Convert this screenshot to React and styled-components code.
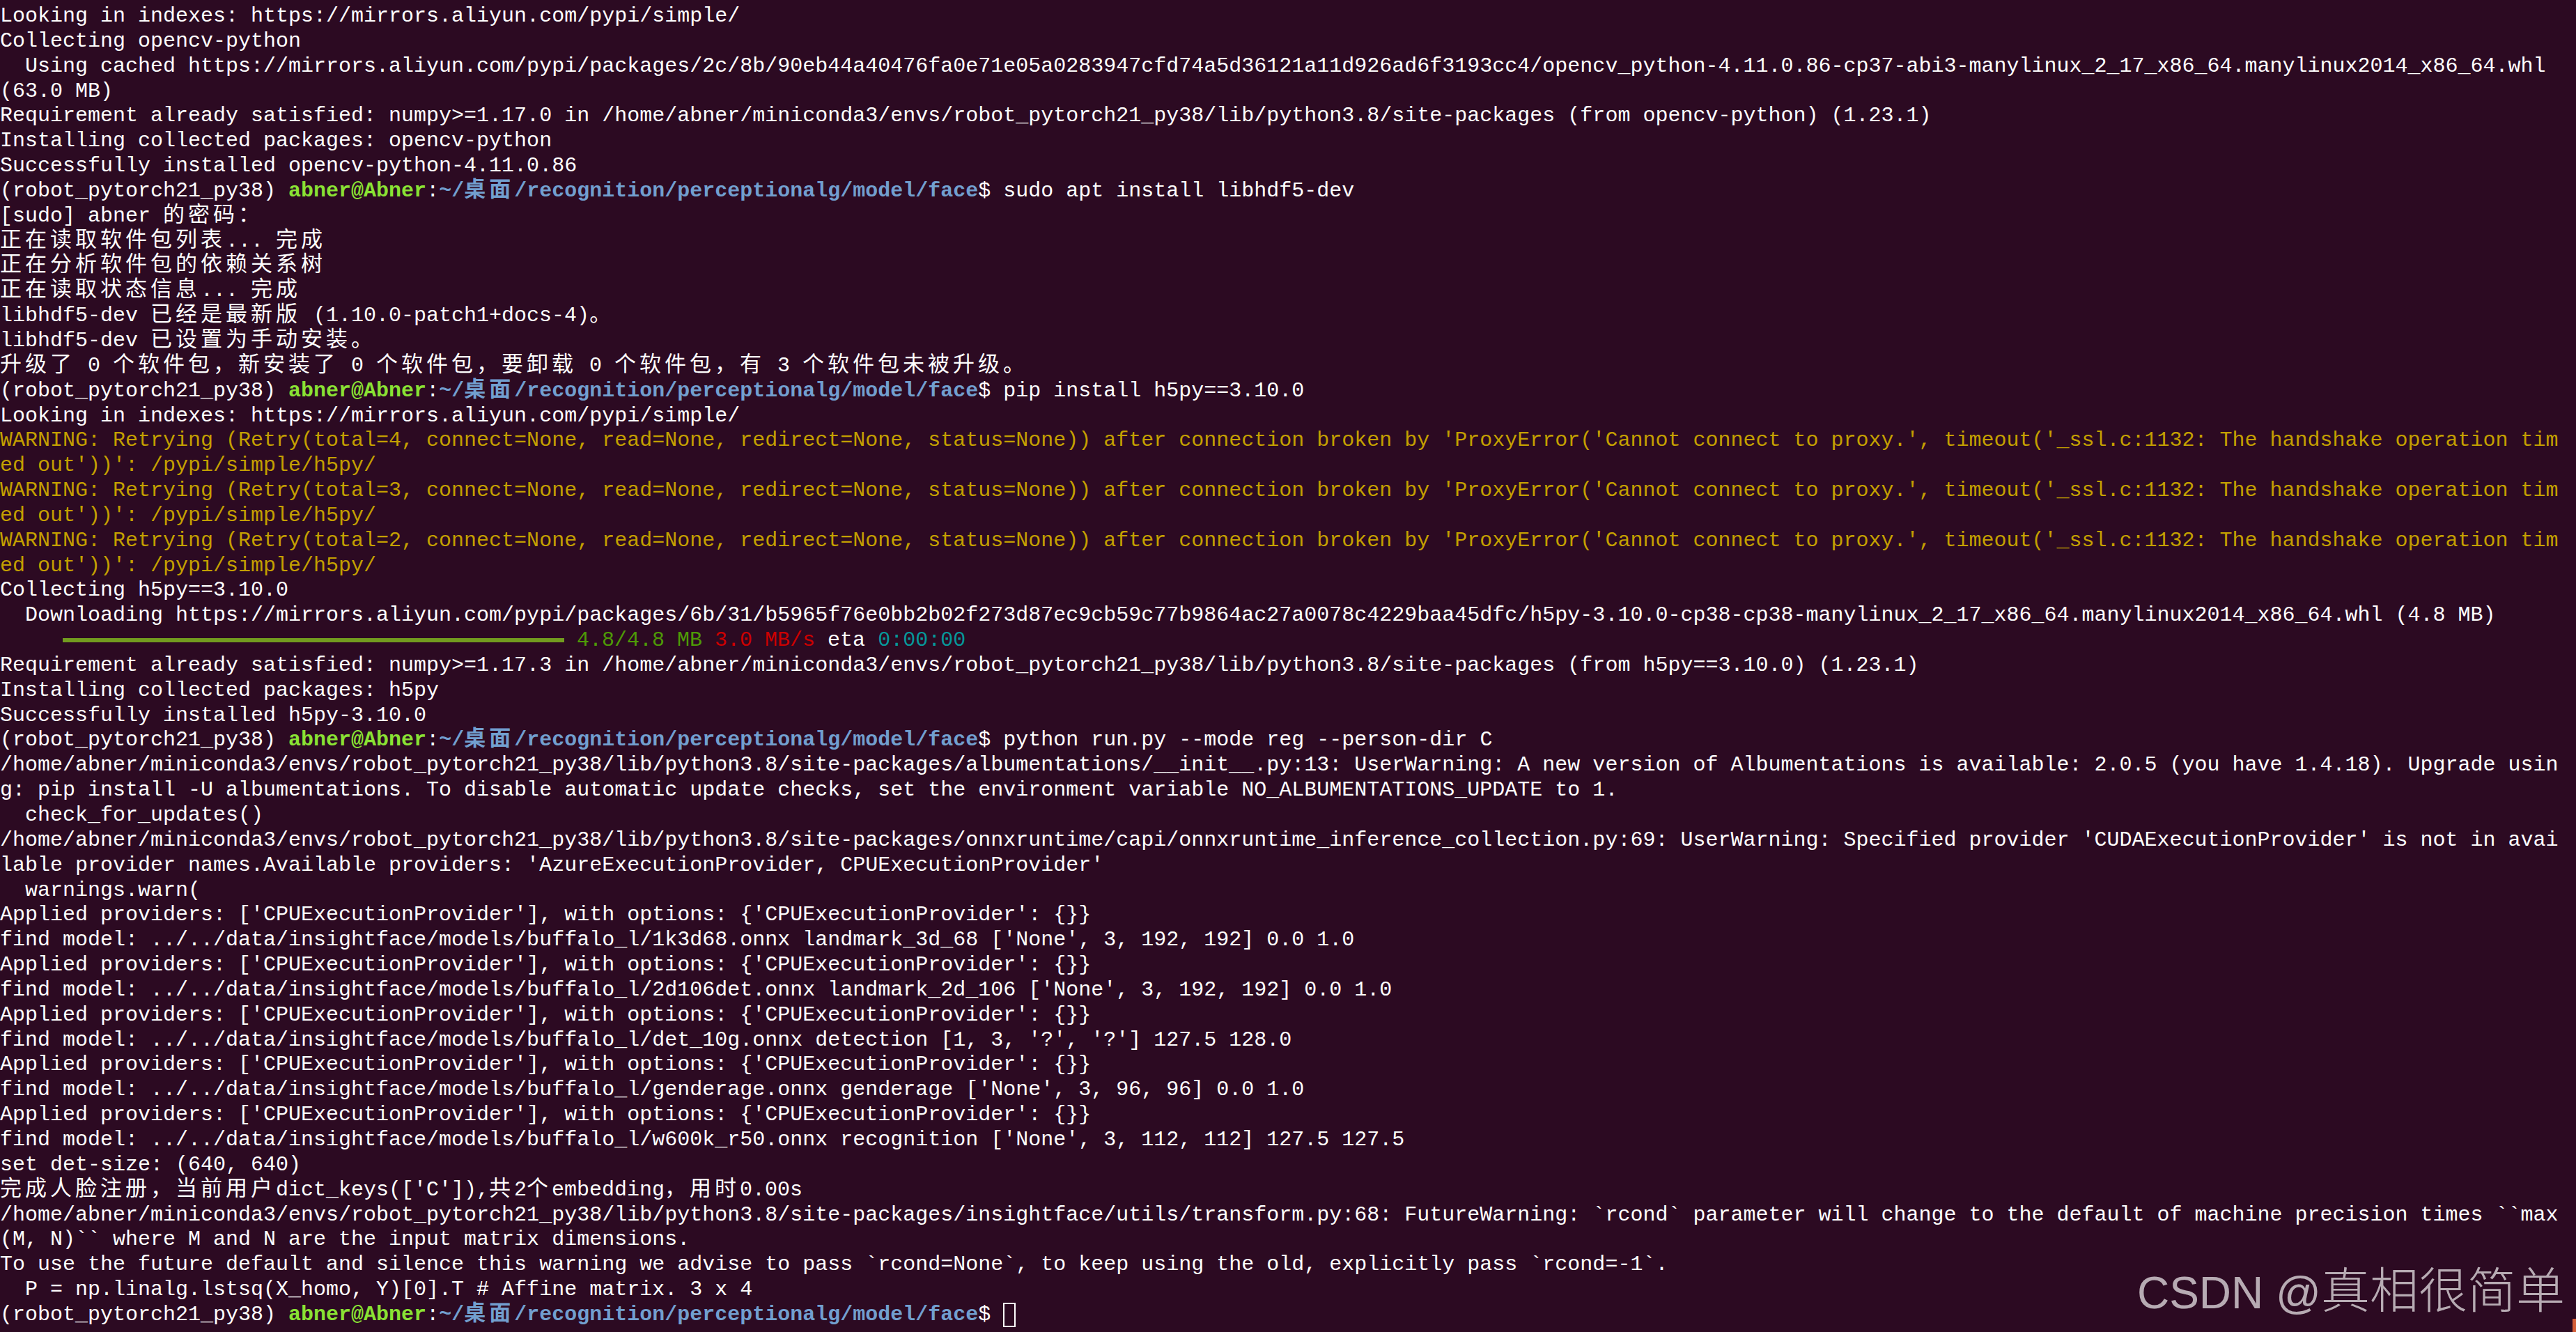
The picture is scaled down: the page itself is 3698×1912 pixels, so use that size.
import styled, { createGlobalStyle } from "styled-components";

const GlobalStyle = createGlobalStyle`
  html, body {
    margin: 0;
    padding: 0;
    background: #2c0a22;
  }
`;

const Screen = styled.div`
  position: relative;
  height: 100vh;
  overflow: hidden;
  box-sizing: border-box;
  padding-top: 6px;
  background: #2c0a22;
  font-family: "Liberation Mono", "DejaVu Sans Mono", monospace;
  font-size: 30px;
  color: #ffffff;
`;

const Line = styled.div`
  height: 35.85px;
  line-height: 35.85px;
  white-space: pre;
  color: ${(p) => p.$color || "#ffffff"};
`;

const tones = {
  user: { color: "#8ae234", bold: true },
  path: { color: "#729fcf", bold: true },
  dl: { color: "#4e9a06" },
  red: { color: "#cc0000" },
  cyan: { color: "#06989a" },
};

const Seg = styled.span`
  color: ${(p) => (tones[p.$tone] ? tones[p.$tone].color : "inherit")};
  font-weight: ${(p) => (tones[p.$tone] && tones[p.$tone].bold ? 700 : 400)};
`;

// wide (CJK) glyphs take two terminal cells: 31px glyph + 5px spacing = 36px
const Wide = styled.span`
  font-family: "Noto Sans CJK SC", sans-serif;
  font-size: 31px;
  letter-spacing: 5px;
  line-height: 0;
`;

const Bar = styled.span`
  display: inline-block;
  width: ${(p) => p.$cols * 18}px;
  height: 6px;
  vertical-align: middle;
  background: #729c1f;
`;

const Cursor = styled.span`
  display: inline-block;
  width: 18px;
  height: 35px;
  box-sizing: border-box;
  border: 2px solid #ffffff;
  vertical-align: top;
`;

const Watermark = styled.div`
  position: absolute;
  right: 16px;
  bottom: 24px;
  display: flex;
  align-items: baseline;
  color: rgba(255, 255, 255, 0.66);
  font-size: 68px;
  line-height: 1;
  white-space: pre;
`;

const MarkLatin = styled.span`
  font-family: "Liberation Sans", Arial, sans-serif;
  font-size: 64px;
`;

const MarkCjk = styled.span`
  font-family: "Noto Sans CJK SC", sans-serif;
  font-weight: 300;
  font-size: 70px;
`;

const Corner = styled.div`
  position: absolute;
  right: 0;
  bottom: 0;
  width: 5px;
  height: 19px;
  background: #d45f38;
`;

const WIDE = /([\u2e80-\u9fff\u3000-\u303f\uff00-\uffef]+)/;

function renderText(text) {
  return text.split(WIDE).map((part, i) =>
    i % 2 === 1 ? <Wide key={i}>{part}</Wide> : part
  );
}

const prompt = (cmd) => [
  ["(robot_pytorch21_py38) "],
  ["abner@Abner", "user"],
  [":"],
  ["~/桌面/recognition/perceptionalg/model/face", "path"],
  ["$ " + cmd],
];

const WARN = "#c4a000";
const warn = (n) =>
  `WARNING: Retrying (Retry(total=${n}, connect=None, read=None, redirect=None, status=None)) after connection broken by 'ProxyError('Cannot connect to proxy.', timeout('_ssl.c:1132: The handshake operation tim`;

const SITE = "/home/abner/miniconda3/envs/robot_pytorch21_py38/lib/python3.8/site-packages";
const APPLIED = "Applied providers: ['CPUExecutionProvider'], with options: {'CPUExecutionProvider': {}}";
const MODELS = "find model: ../../data/insightface/models/buffalo_l/";

const lines = [
  "Looking in indexes: https://mirrors.aliyun.com/pypi/simple/",
  "Collecting opencv-python",
  "  Using cached https://mirrors.aliyun.com/pypi/packages/2c/8b/90eb44a40476fa0e71e05a0283947cfd74a5d36121a11d926ad6f3193cc4/opencv_python-4.11.0.86-cp37-abi3-manylinux_2_17_x86_64.manylinux2014_x86_64.whl",
  "(63.0 MB)",
  `Requirement already satisfied: numpy>=1.17.0 in ${SITE} (from opencv-python) (1.23.1)`,
  "Installing collected packages: opencv-python",
  "Successfully installed opencv-python-4.11.0.86",
  prompt("sudo apt install libhdf5-dev"),
  "[sudo] abner 的密码：",
  "正在读取软件包列表... 完成",
  "正在分析软件包的依赖关系树",
  "正在读取状态信息... 完成",
  "libhdf5-dev 已经是最新版 (1.10.0-patch1+docs-4)。",
  "libhdf5-dev 已设置为手动安装。",
  "升级了 0 个软件包，新安装了 0 个软件包，要卸载 0 个软件包，有 3 个软件包未被升级。",
  prompt("pip install h5py==3.10.0"),
  "Looking in indexes: https://mirrors.aliyun.com/pypi/simple/",
  { text: warn(4), color: WARN },
  { text: "ed out'))': /pypi/simple/h5py/", color: WARN },
  { text: warn(3), color: WARN },
  { text: "ed out'))': /pypi/simple/h5py/", color: WARN },
  { text: warn(2), color: WARN },
  { text: "ed out'))': /pypi/simple/h5py/", color: WARN },
  "Collecting h5py==3.10.0",
  "  Downloading https://mirrors.aliyun.com/pypi/packages/6b/31/b5965f76e0bb2b02f273d87ec9cb59c77b9864ac27a0078c4229baa45dfc/h5py-3.10.0-cp38-cp38-manylinux_2_17_x86_64.manylinux2014_x86_64.whl (4.8 MB)",
  [["     "], { bar: 40 }, [" "], ["4.8/4.8 MB", "dl"], [" "], ["3.0 MB/s", "red"], [" eta "], ["0:00:00", "cyan"]],
  `Requirement already satisfied: numpy>=1.17.3 in ${SITE} (from h5py==3.10.0) (1.23.1)`,
  "Installing collected packages: h5py",
  "Successfully installed h5py-3.10.0",
  prompt("python run.py --mode reg --person-dir C"),
  `${SITE}/albumentations/__init__.py:13: UserWarning: A new version of Albumentations is available: 2.0.5 (you have 1.4.18). Upgrade usin`,
  "g: pip install -U albumentations. To disable automatic update checks, set the environment variable NO_ALBUMENTATIONS_UPDATE to 1.",
  "  check_for_updates()",
  `${SITE}/onnxruntime/capi/onnxruntime_inference_collection.py:69: UserWarning: Specified provider 'CUDAExecutionProvider' is not in avai`,
  "lable provider names.Available providers: 'AzureExecutionProvider, CPUExecutionProvider'",
  "  warnings.warn(",
  APPLIED,
  `${MODELS}1k3d68.onnx landmark_3d_68 ['None', 3, 192, 192] 0.0 1.0`,
  APPLIED,
  `${MODELS}2d106det.onnx landmark_2d_106 ['None', 3, 192, 192] 0.0 1.0`,
  APPLIED,
  `${MODELS}det_10g.onnx detection [1, 3, '?', '?'] 127.5 128.0`,
  APPLIED,
  `${MODELS}genderage.onnx genderage ['None', 3, 96, 96] 0.0 1.0`,
  APPLIED,
  `${MODELS}w600k_r50.onnx recognition ['None', 3, 112, 112] 127.5 127.5`,
  "set det-size: (640, 640)",
  "完成人脸注册，当前用户dict_keys(['C']),共2个embedding，用时0.00s",
  `${SITE}/insightface/utils/transform.py:68: FutureWarning: \`rcond\` parameter will change to the default of machine precision times \`\`max`,
  "(M, N)`` where M and N are the input matrix dimensions.",
  "To use the future default and silence this warning we advise to pass `rcond=None`, to keep using the old, explicitly pass `rcond=-1`.",
  "  P = np.linalg.lstsq(X_homo, Y)[0].T # Affine matrix. 3 x 4",
  [...prompt(""), { cursor: true }],
];

function renderLine(line, i) {
  if (typeof line === "string") return <Line key={i}>{renderText(line)}</Line>;
  if (!Array.isArray(line)) {
    return (
      <Line key={i} $color={line.color}>
        {renderText(line.text)}
      </Line>
    );
  }
  return (
    <Line key={i}>
      {line.map((seg, j) => {
        if (seg.bar) return <Bar key={j} $cols={seg.bar} />;
        if (seg.cursor) return <Cursor key={j} />;
        return (
          <Seg key={j} $tone={seg[1]}>
            {renderText(seg[0])}
          </Seg>
        );
      })}
    </Line>
  );
}

export default function App() {
  return (
    <>
      <GlobalStyle />
      <Screen>
        {lines.map(renderLine)}
        <Watermark>
          <MarkLatin>CSDN @</MarkLatin>
          <MarkCjk>真相很简单</MarkCjk>
        </Watermark>
        <Corner />
      </Screen>
    </>
  );
}
